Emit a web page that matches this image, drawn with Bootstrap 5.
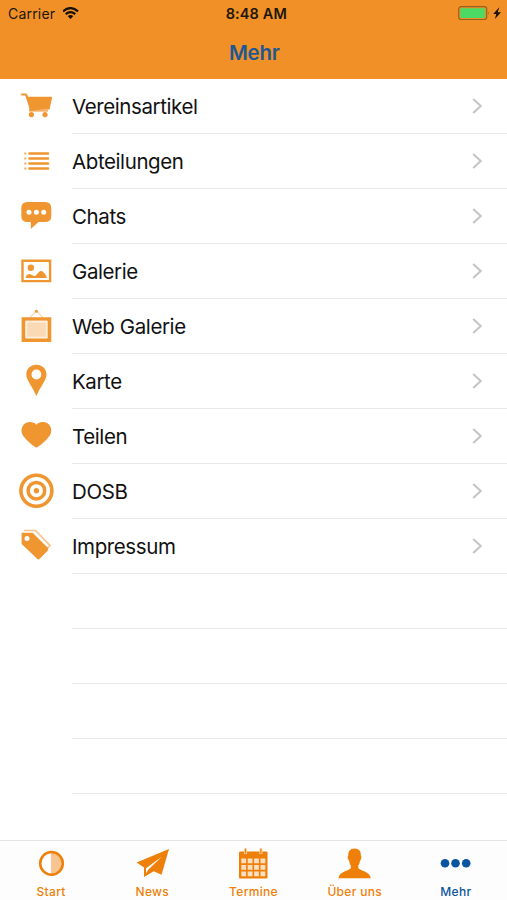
<!DOCTYPE html>
<html lang="de">
<head>
<meta charset="utf-8">
<meta name="viewport" content="width=device-width, initial-scale=1">
<title>Mehr</title>
<link href="https://cdn.jsdelivr.net/npm/bootstrap@5.3.0/dist/css/bootstrap.min.css" rel="stylesheet">
<style>
:root{--brand:#f09026;--icon:#f09631;--tab:#ee7f08;--active:#0b55a0}
body{font-family:Inter,"Liberation Sans",sans-serif;color:#111;height:900px;overflow:hidden}
svg{display:block;flex:none}
.app-head{background:var(--brand);height:79px}
.status{height:27px;font-size:14px;line-height:27px;color:#20160a}
.status .clock{font-weight:600;font-size:14.5px;letter-spacing:.12px;padding-left:1.5px}
.status .carrier{letter-spacing:.2px}
.title{font-size:20.5px;font-weight:600;line-height:51px;color:#1d5893;letter-spacing:-.25px;margin:0;padding-left:1.5px}
.menu-row{height:55.04px}
.menu-row svg{fill:var(--icon)}
.menu-text{margin-left:18px;border-bottom:1.3px solid #e9e9eb;font-size:20.5px;letter-spacing:-.4px}
.menu-text span{padding-top:2px}
.menu-text svg{fill:none;stroke:#c5c5c9;stroke-width:2.1}
.tabs{height:60px;border-top:1.5px solid #e4e4e6;background:#fdfdfd}
.tab{width:101.2px;color:var(--tab);font-size:12px;font-weight:500;letter-spacing:.3px;line-height:14px}
.tab svg{fill:currentColor}
.tab.now{color:var(--active)}
</style>
<script src="https://cdn.jsdelivr.net/npm/bootstrap@5.3.0/dist/js/bootstrap.bundle.min.js"></script>
</head>
<body class="d-flex flex-column bg-white">
<header class="app-head flex-shrink-0">
  <div class="status row g-0">
    <div class="col d-flex align-items-center ps-2"><span class="carrier">Carrier</span>
      <svg class="ms-2" width="17" height="13" viewBox="1 0.500 17 13" fill="none" stroke="#171009" stroke-width="2.200"><path d="M1 4.800Q8.500-1.600 16 4.800M3.700 7.700Q8.500 3.700 13.300 7.700"/><path d="M5.700 9.500Q8.500 7.300 11.300 9.500L8.500 12.500Z" fill="#171009" stroke="none"/></svg>
    </div>
    <div class="col-auto clock">8:48 AM</div>
    <div class="col d-flex align-items-center justify-content-end pe-1">
      <svg width="45" height="16" viewBox="0 0.500 45 16"><rect x=".7" y="1.200" width="28" height="12.800" rx="2.500" fill="none" stroke="#94611f" stroke-width="1.200"/><rect x="2.300" y="2.800" width="24.800" height="9.600" rx="1" fill="#4cd964"/><path d="M30.300 5.500q1.600 2.100 0 4.200z" fill="#94611f"/><path d="M41.300 1.800L35.200 8.600H38.300L36.900 13.600L43 6.800H39.700Z" fill="#171009"/></svg>
    </div>
  </div>
  <h1 class="title text-center">Mehr</h1>
</header>

<main class="flex-grow-1 overflow-hidden ps-3">
  <div class="menu-row d-flex ps-1"><svg width="34" height="54" viewBox="20 0 34 54"><path d="M20.700 14.500H26.600L28.200 17.800H52.300L49.500 30.500L30.500 31.200H48V32.400H29L29.300 29L25.300 16.500H21.500Z"/><circle cx="31.400" cy="35.600" r="2.600"/><circle cx="45" cy="35.600" r="2.600"/></svg><div class="menu-text d-flex flex-grow-1 align-items-center justify-content-between"><span>Vereinsartikel</span><svg width="35" height="18" viewBox="0 0 35 18"><path d="M1.200 2L8.700 9L1.200 16"/></svg></div></div>
  <div class="menu-row d-flex ps-1"><svg width="34" height="54" viewBox="20 0 34 54"><path d="M29.500 19.500H48M29.500 24.500H48M29.500 29.500H48M29.500 34.500H48" stroke="#f09631" stroke-width="2.700" stroke-linecap="round"/><path d="M24.300 18.500h2v2h-2zm0 5h2v2h-2zm0 5h2v2h-2zm0 5h2v2h-2z" opacity=".8"/></svg><div class="menu-text d-flex flex-grow-1 align-items-center justify-content-between"><span>Abteilungen</span><svg width="35" height="18" viewBox="0 0 35 18"><path d="M1.200 2L8.700 9L1.200 16"/></svg></div></div>
  <div class="menu-row d-flex ps-1"><svg width="34" height="54" viewBox="20 0 34 54"><path d="M27.500 13H45q6.300 0 6.300 6.300V27q0 6-6.300 6H38.500L30.800 40V33H27.500q-6.200 0-6.200-6V19.300Q21.300 13 27.500 13Z"/><g fill="#fff"><circle cx="29" cy="23.300" r="2.500"/><circle cx="36.400" cy="23.300" r="2.500"/><circle cx="43.700" cy="23.300" r="2.500"/></g></svg><div class="menu-text d-flex flex-grow-1 align-items-center justify-content-between"><span>Chats</span><svg width="35" height="18" viewBox="0 0 35 18"><path d="M1.200 2L8.700 9L1.200 16"/></svg></div></div>
  <div class="menu-row d-flex ps-1"><svg width="34" height="54" viewBox="20 0 34 54"><path fill-rule="evenodd" d="M21.300 15.600H51.300V38.300H21.300ZM23.700 18V35.900H48.900V18Z"/><circle cx="30.800" cy="23.800" r="3.200"/><path d="M25.800 34V32.300Q28.200 29.200 30.800 30.500L34.200 32Q36 32 37.300 29.800Q41 24.400 44.500 29.500Q46.600 31 46.800 34Z"/></svg><div class="menu-text d-flex flex-grow-1 align-items-center justify-content-between"><span>Galerie</span><svg width="35" height="18" viewBox="0 0 35 18"><path d="M1.200 2L8.700 9L1.200 16"/></svg></div></div>
  <div class="menu-row d-flex ps-1"><svg width="34" height="54" viewBox="20 0 34 54"><path d="M29.800 18.500L36.400 12L43 18.500" fill="none" stroke="#f5bd80" stroke-width="1"/><circle cx="36.400" cy="12.300" r="1.500"/><path fill-rule="evenodd" d="M21.600 18.200H51.300V42.900H21.600ZM25.500 21.800V39.300H47.400V21.800Z"/><path d="M25.500 21.800H47.400V39.300H25.500Z" fill="#fdf0e0"/><path d="M27.200 23.500H45.800V37.700H27.200Z" fill="#fad9b5"/></svg><div class="menu-text d-flex flex-grow-1 align-items-center justify-content-between"><span>Web Galerie</span><svg width="35" height="18" viewBox="0 0 35 18"><path d="M1.200 2L8.700 9L1.200 16"/></svg></div></div>
  <div class="menu-row d-flex ps-1"><svg width="34" height="54" viewBox="20 0 34 54"><path fill-rule="evenodd" d="M36.400 10.700C42.300 10.700 46.500 15 46.500 20.500C46.500 26.500 39.800 33 36.400 42.300C33 33 26.300 26.500 26.300 20.500C26.300 15 30.500 10.700 36.400 10.700ZM36.400 15.600A4.900 4.900 0 1 0 36.400 25.400A4.900 4.900 0 1 0 36.400 15.600Z"/></svg><div class="menu-text d-flex flex-grow-1 align-items-center justify-content-between"><span>Karte</span><svg width="35" height="18" viewBox="0 0 35 18"><path d="M1.200 2L8.700 9L1.200 16"/></svg></div></div>
  <div class="menu-row d-flex ps-1"><svg width="34" height="54" viewBox="20 0 34 54"><path d="M36.400 15.700C39 12.600 44.500 11.900 48.500 15C51.800 18 52.200 23.500 49.500 27C46.500 31 40.500 36.600 36.400 38.800C32.300 36.600 26.300 31 23.300 27C20.600 23.500 21 18 24.300 15C28.300 11.900 33.800 12.600 36.400 15.700Z"/></svg><div class="menu-text d-flex flex-grow-1 align-items-center justify-content-between"><span>Teilen</span><svg width="35" height="18" viewBox="0 0 35 18"><path d="M1.200 2L8.700 9L1.200 16"/></svg></div></div>
  <div class="menu-row d-flex ps-1"><svg width="34" height="54" viewBox="20 0 34 54" overflow="visible"><g fill="none" stroke="#f09631"><circle cx="36.400" cy="26.700" r="15.500" stroke-width="3.600"/><circle cx="36.400" cy="26.700" r="8.300" stroke-width="3.500"/></g><circle cx="36.400" cy="26.700" r="2.700"/></svg><div class="menu-text d-flex flex-grow-1 align-items-center justify-content-between"><span>DOSB</span><svg width="35" height="18" viewBox="0 0 35 18"><path d="M1.200 2L8.700 9L1.200 16"/></svg></div></div>
  <div class="menu-row d-flex ps-1"><svg width="34" height="54" viewBox="20 0.500 34 54"><path d="M24 12H35.500L50 27L47.500 29.500" fill="none" stroke="#f6c38b" stroke-width="1.700"/><path fill-rule="evenodd" d="M21.600 14.300H32.600L47.800 29.300Q49 30.700 47.800 32L39.700 40.300Q38.400 41.500 37.100 40.300L21.600 25.500ZM27 17.400A2.500 2.500 0 1 0 27 22.400A2.500 2.500 0 1 0 27 17.400Z"/></svg><div class="menu-text d-flex flex-grow-1 align-items-center justify-content-between"><span>Impressum</span><svg width="35" height="18" viewBox="0 0 35 18"><path d="M1.200 2L8.700 9L1.200 16"/></svg></div></div>
  <div class="menu-row d-flex ps-1"><svg width="34" height="54"></svg><div class="menu-text flex-grow-1"></div></div>
  <div class="menu-row d-flex ps-1"><svg width="34" height="54"></svg><div class="menu-text flex-grow-1"></div></div>
  <div class="menu-row d-flex ps-1"><svg width="34" height="54"></svg><div class="menu-text flex-grow-1"></div></div>
  <div class="menu-row d-flex ps-1"><svg width="34" height="54"></svg><div class="menu-text flex-grow-1"></div></div>
</main>

<nav class="tabs d-flex flex-shrink-0 justify-content-center">
  <div class="tab d-flex flex-column align-items-center"><svg width="36" height="44" viewBox="0 0 36 44"><path d="M18 11V34A11.500 11.500 0 0 0 18 11Z" fill="#f8c490"/><circle cx="18.500" cy="22.400" r="11.300" fill="none" stroke="#ee7f08" stroke-width="2.500"/></svg><span>Start</span></div>
  <div class="tab d-flex flex-column align-items-center"><svg width="36" height="44" viewBox="0 0 36 44"><path d="M35 8L27.500 33.800L19.800 30.200L10 36V26.600L2.600 21.600ZM28 15.500L12 27.200V32.300L14.500 28.500Z" fill-rule="evenodd"/></svg><span>News</span></div>
  <div class="tab d-flex flex-column align-items-center"><svg width="36" height="44" viewBox="1 0 36 44"><path d="M5 10.500H31.500Q32.500 10.500 32.500 11.500V36.500Q32.500 37.500 31.500 37.500H5Q4 37.500 4 36.500V11.500Q4 10.500 5 10.500Z"/><path d="M10.500 7.500V13M25.900 7.500V13" stroke="#fbdab6" stroke-width="3"/><path d="M10.500 7.500V12.500M25.900 7.500V12.500" stroke="#ee7f08" stroke-width="1.300"/><path d="M6.300 17.500h4.800v4.800h-4.800zm6.400 0h4.800v4.800h-4.800zm6.400 0h4.800v4.800h-4.800zm6.400 0h4.800v4.800h-4.800zM6.300 24h4.800v4.800h-4.800zm6.400 0h4.800v4.800h-4.800zm6.400 0h4.800v4.800h-4.800zm6.400 0h4.800v4.800h-4.800zM6.300 30.500h4.800v4.800h-4.800zm6.400 0h4.800v4.800h-4.800zm6.400 0h4.800v4.800h-4.800zm6.400 0h4.800v4.800h-4.800z" fill="#fbdfc0"/></svg><span>Termine</span></div>
  <div class="tab d-flex flex-column align-items-center"><svg width="36" height="44" viewBox="0.500 0 36 44"><path d="M18 7.500C22.500 7.500 24.700 10.500 24.300 14.500Q25.700 15.500 24.600 18L23.500 20Q23.100 23 21.800 24.300V27.300C23.200 29.700 33.500 30.400 34.200 37.200H2C2.700 30.400 13 29.700 14.300 27.300V24.300Q13 23 12.600 20L11.500 18Q10.400 15.500 11.800 14.500C11.400 10.500 13.600 7.500 18 7.500Z"/></svg><span>Über uns</span></div>
  <div class="tab now d-flex flex-column align-items-center"><svg width="36" height="44" viewBox="0.500 0 36 44"><circle cx="7.500" cy="22.300" r="4.300"/><circle cx="18" cy="22.300" r="4.300"/><circle cx="28.700" cy="22.300" r="4.300"/></svg><span>Mehr</span></div>
</nav>
</body>
</html>
